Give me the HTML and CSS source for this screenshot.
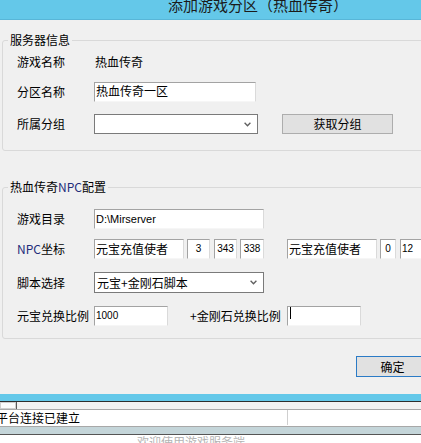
FILE: index.html
```html
<!DOCTYPE html>
<html lang="zh-CN">
<head>
<meta charset="utf-8">
<title>添加游戏分区</title>
<link rel="stylesheet" href="styles.css">
</head>
<body>
<div class="titlebar"><span class="title-text">添加游戏分区（热血传奇）</span></div>

<fieldset class="group group-server">
  <legend class="group-label">服务器信息</legend>
  <div class="group-body body-server">
    <div class="row">
      <span class="label">游戏名称</span>
      <span class="value">热血传奇</span>
    </div>
    <div class="row gap10">
      <span class="label">分区名称</span>
      <div class="field w162">热血传奇一区</div>
    </div>
    <div class="row gap12">
      <span class="label">所属分组</span>
      <div class="select w164">
        <span class="select-text"></span>
        <svg class="chev" width="7" height="5" viewBox="0 0 7 5"><polyline points="0.6,0.8 3.5,3.8 6.4,0.8" fill="none" stroke="#5f5f5f" stroke-width="1.3"/></svg>
      </div>
      <div class="btn btn-fetch">获取分组</div>
    </div>
  </div>
</fieldset>

<fieldset class="group group-npc">
  <legend class="group-label">热血传奇<span class="latin-blue">NPC</span>配置</legend>
  <div class="group-body body-npc">
    <div class="row">
      <span class="label">游戏目录</span>
      <div class="field w170 latin">D:\Mirserver</div>
    </div>
    <div class="row gap10">
      <span class="label"><span class="latin-blue">NPC</span>坐标</span>
      <div class="field w90">元宝充值使者</div>
      <div class="field w23 num m3">3</div>
      <div class="field w23 num m4">343</div>
      <div class="field w24 num m3">338</div>
      <div class="field w90 m23">元宝充值使者</div>
      <div class="field w16 num m3">0</div>
      <div class="field w30 num-left m4">12</div>
    </div>
    <div class="row row21 gap13">
      <span class="label">脚本选择</span>
      <div class="select w170">
        <span class="select-text">元宝+金刚石脚本</span>
        <svg class="chev" width="7" height="5" viewBox="0 0 7 5"><polyline points="0.6,0.8 3.5,3.8 6.4,0.8" fill="none" stroke="#5f5f5f" stroke-width="1.3"/></svg>
      </div>
    </div>
    <div class="row gap13">
      <span class="label">元宝兑换比例</span>
      <div class="field w74 num-left">1000</div>
      <span class="label2">+金刚石兑换比例</span>
      <div class="field w74"><span class="caret"></span></div>
    </div>
  </div>
</fieldset>

<div class="actions"><div class="btn btn-ok">确定</div></div>

<div class="statusbar">
  <div class="strip-blue"></div>
  <div class="scroll-row"><div class="scroll-box"></div><div class="scroll-tick"></div></div>
  <div class="status-row"><span class="status-text">平台连接已建立</span><div class="status-divider"></div></div>
  <div class="strip-gray"></div>
  <div class="under"><span class="under-text">欢迎使用游戏服务端</span></div>
</div>
</body>
</html>
```

FILE: styles.css
```css
html, body {
  margin: 0;
  padding: 0;
}
body {
  width: 421px;
  height: 443px;
  overflow: hidden;
  background: #f0f0f0;
  font-family: "Noto Sans CJK SC", "Noto Sans", sans-serif;
  font-size: 12px;
  color: #000;
}

.titlebar {
  height: 19px;
  background: #64c8e9;
  border-bottom: 1px solid #58b6d8;
  padding-left: 168px;
  overflow: hidden;
}
.title-text {
  display: block;
  font-size: 15px;
  line-height: 15px;
  margin-top: -3px;
  color: #1b1b1b;
  white-space: nowrap;
}

.group {
  margin: 13px 0 0 2px;
  padding: 0;
  border: 1px solid #d9d9d9;
  border-radius: 3px;
  width: 440px;
  box-sizing: border-box;
  min-width: 0;
}
.group-npc {
  margin-top: 29px;
}
.group-label {
  margin-left: 5px;
  padding: 0 2px;
  font-size: 12px;
  line-height: 14px;
  white-space: nowrap;
}
.latin-blue {
  color: #1f2d7a;
}
.group-body {
  padding-left: 14px;
}
.body-server {
  padding-top: 5px;
  padding-bottom: 16px;
}
.body-npc {
  padding-top: 15px;
  padding-bottom: 12px;
}

.row {
  display: flex;
  align-items: center;
  height: 20px;
}
.row21 { height: 21px; }
.gap10 { margin-top: 10px; }
.gap12 { margin-top: 12px; }
.gap13 { margin-top: 13px; }

.label {
  width: 77px;
  flex-shrink: 0;
  line-height: 14px;
  white-space: nowrap;
}
.label2 {
  width: 97px;
  margin-left: 22px;
  flex-shrink: 0;
  line-height: 14px;
  white-space: nowrap;
}
.value {
  margin-left: 1px;
  line-height: 14px;
}

.field {
  box-sizing: border-box;
  height: 20px;
  flex-shrink: 0;
  background: #fff;
  border: 1px solid;
  border-color: #a3a3a3 #dadada #f6f6f6 #a3a3a3;
  padding: 0 0 0 1px;
  line-height: 15px;
  white-space: nowrap;
  overflow: hidden;
  display: flex;
  align-items: flex-start;
}
.latin {
  font-family: "Liberation Sans", sans-serif;
  font-size: 11px;
  line-height: 16px;
  padding-top: 1px;
}
.num, .num-left {
  font-family: "Liberation Sans", sans-serif;
  font-size: 10px;
  line-height: 14px;
  padding-top: 2px;
}
.num {
  justify-content: center;
  padding-left: 0;
}
.num-left {
  padding-left: 1px;
}
.w16 { width: 16px; }
.w23 { width: 23px; }
.w24 { width: 24px; }
.w30 { width: 30px; }
.w74 { width: 74px; }
.w90 { width: 90px; padding-top: 1px; }
.w162 { width: 162px; }
.w164 { width: 164px; }
.w170 { width: 170px; }
.m3 { margin-left: 3px; }
.m4 { margin-left: 4px; }
.m23 { margin-left: 23px; }

.caret {
  display: block;
  width: 1px;
  height: 12px;
  background: #000;
  margin-left: 1px;
}

.select {
  box-sizing: border-box;
  height: 100%;
  flex-shrink: 0;
  background: #fff;
  border: 1px solid #7a7a7a;
  display: flex;
  align-items: center;
  justify-content: space-between;
  padding: 0 6px 0 2px;
}
.select-text {
  line-height: 14px;
  white-space: nowrap;
}
.chev {
  display: block;
  flex-shrink: 0;
}

.btn {
  box-sizing: border-box;
  background: #e1e1e1;
  border: 1px solid #adadad;
  display: flex;
  align-items: center;
  justify-content: center;
  line-height: 14px;
  flex-shrink: 0;
}
.btn-fetch {
  width: 111px;
  height: 20px;
  margin-left: 24px;
}
.actions {
  display: flex;
  padding-left: 356px;
  margin-top: 17px;
}
.btn-ok {
  width: 73px;
  height: 21px;
  border-color: #2b7bc6;
}

.statusbar {
  margin-top: 17px;
  background: #fff;
}
.strip-blue {
  height: 7px;
  background: #64c8e9;
  border-bottom: 1px solid #2e2e2e;
}
.scroll-row {
  height: 7px;
  background: #f2f2f2;
  display: flex;
  border-bottom: 1px solid #a8a8a8;
}
.scroll-box {
  width: 14px;
  height: 5px;
  border: 1px solid #cfcfcf;
  background: #fbfbfb;
}
.scroll-tick {
  width: 1px;
  height: 7px;
  background: #5a5a5a;
}
.status-row {
  height: 16px;
  background: #fff;
  display: flex;
  border-bottom: 1px solid #a8a8a8;
}
.status-text {
  width: 291px;
  margin-left: -4px;
  flex-shrink: 0;
  line-height: 16px;
  white-space: nowrap;
}
.status-divider {
  width: 1px;
  height: 15px;
  background: #cfcfcf;
}
.strip-gray {
  height: 7px;
  background: #c4d5d9;
  border-bottom: 1px solid #555;
}
.under {
  height: 10px;
  overflow: hidden;
  background: #fff;
  padding-left: 137px;
}
.under-text {
  display: block;
  line-height: 14px;
  margin-top: 0;
  color: #b4b4b4;
  white-space: nowrap;
}
```
